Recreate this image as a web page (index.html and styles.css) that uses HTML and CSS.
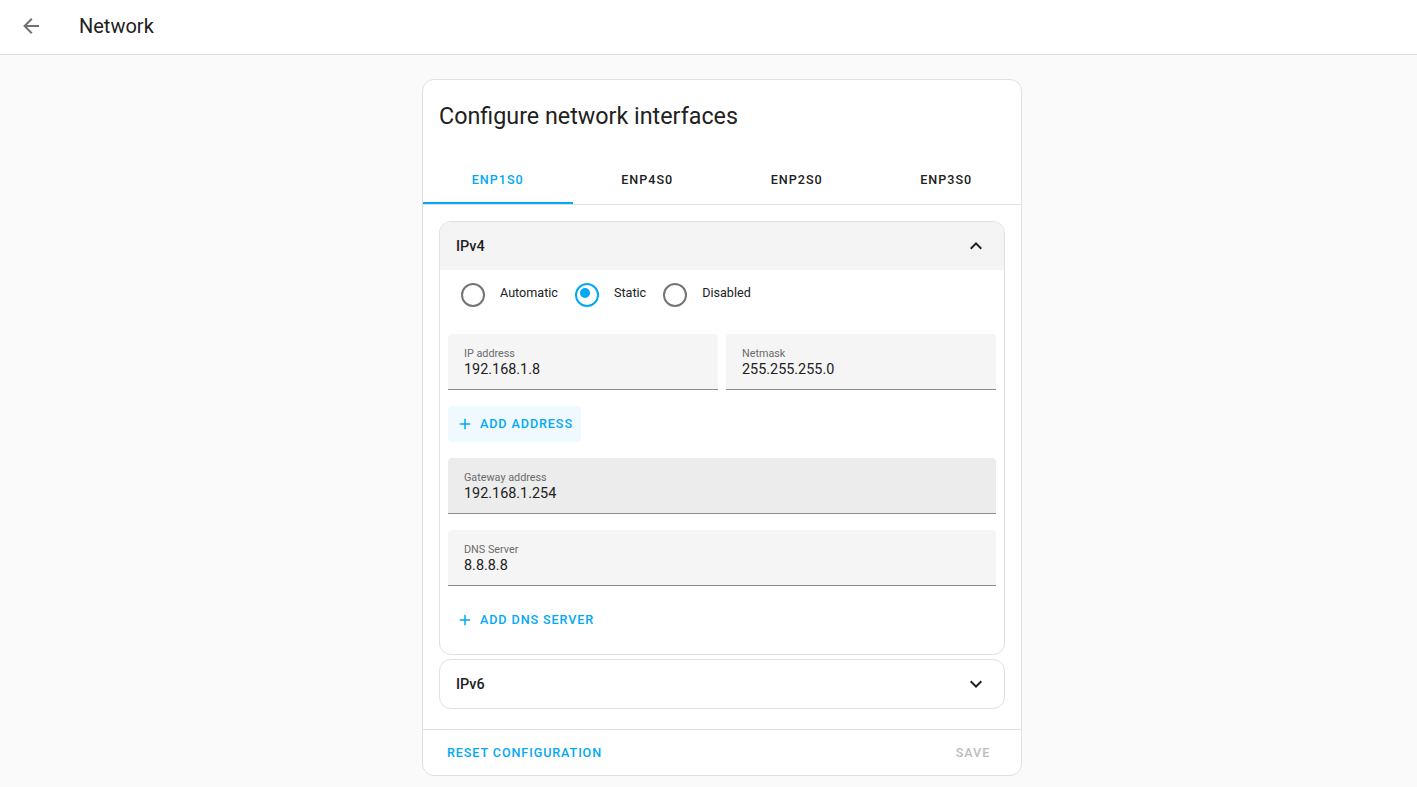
FILE: index.html
```html
<!DOCTYPE html>
<html lang="en">
<head>
<meta charset="utf-8">
<title>Network</title>
<link rel="stylesheet" href="styles.css">
</head>
<body>
<header class="toolbar">
  <div class="icon-btn">
    <svg viewBox="0 0 24 24" width="24" height="24"><path d="M20,11V13H8L13.5,18.5L12.08,19.92L4.16,12L12.08,4.08L13.5,5.5L8,11H20Z"/></svg>
  </div>
  <div class="toolbar-title">Network</div>
</header>
<main class="main">
  <section class="card">
    <h1 class="card-header">Configure network interfaces</h1>
    <nav class="tabs">
      <div class="tab active">ENP1S0</div>
      <div class="tab">ENP4S0</div>
      <div class="tab">ENP2S0</div>
      <div class="tab">ENP3S0</div>
    </nav>
    <div class="card-content">
      <div class="panel">
        <div class="panel-header expanded">
          <span>IPv4</span>
          <svg viewBox="0 0 24 24" width="24" height="24"><path d="M7.41,15.41L12,10.83L16.59,15.41L18,14L12,8L6,14L7.41,15.41Z"/></svg>
        </div>
        <div class="panel-body">
          <div class="radios">
            <label class="formfield"><span class="radio"></span><span class="radio-label">Automatic</span></label>
            <label class="formfield"><span class="radio checked"></span><span class="radio-label">Static</span></label>
            <label class="formfield"><span class="radio"></span><span class="radio-label">Disabled</span></label>
          </div>
          <div class="field-row">
            <div class="field"><span class="field-label">IP address</span><span class="field-value">192.168.1.8</span></div>
            <div class="field"><span class="field-label">Netmask</span><span class="field-value">255.255.255.0</span></div>
          </div>
          <div class="btn icon-text tinted">
            <svg viewBox="0 0 24 24" width="18" height="18"><path d="M19,13H13V19H11V13H5V11H11V5H13V11H19V13Z"/></svg>
            <span>ADD ADDRESS</span>
          </div>
          <div class="field hover"><span class="field-label">Gateway address</span><span class="field-value">192.168.1.254</span></div>
          <div class="field"><span class="field-label">DNS Server</span><span class="field-value">8.8.8.8</span></div>
          <div class="btn icon-text">
            <svg viewBox="0 0 24 24" width="18" height="18"><path d="M19,13H13V19H11V13H5V11H11V5H13V11H19V13Z"/></svg>
            <span>ADD DNS SERVER</span>
          </div>
        </div>
      </div>
      <div class="panel second">
        <div class="panel-header">
          <span>IPv6</span>
          <svg viewBox="0 0 24 24" width="24" height="24"><path d="M7.41,8.58L12,13.17L16.59,8.58L18,10L12,16L6,10L7.41,8.58Z"/></svg>
        </div>
      </div>
    </div>
    <div class="card-actions">
      <div class="btn text">RESET CONFIGURATION</div>
      <div class="btn text disabled">SAVE</div>
    </div>
  </section>
</main>
</body>
</html>
```
FILE: styles.css
```css
* { box-sizing: border-box; }
html, body { margin: 0; padding: 0; }
body {
  font-family: Roboto, "Noto Sans", sans-serif;
  background: #fafafa;
  color: #212121;
  min-height: 787px;
}
.toolbar {
  height: 55px;
  background: #fff;
  border-bottom: 1px solid #e0e0e0;
  display: flex;
  align-items: center;
  padding: 0 0 2px 7px;
}
.icon-btn {
  width: 48px;
  height: 48px;
  display: flex;
  align-items: center;
  justify-content: center;
  fill: #727272;
}
.toolbar-title {
  margin-left: 24px;
  font-size: 20px;
  font-weight: 400;
  color: #212121;
}
.main {
  display: flex;
  justify-content: center;
  padding: 24px 0 0 27px;
}
.card {
  width: 600px;
  background: #fff;
  border: 1px solid #e0e0e0;
  border-radius: 12px;
}
.card-header {
  margin: 0;
  padding: 12px 16px 16px;
  font-size: 23.3px;
  font-weight: 400;
  line-height: 48px;
  color: #212121;
}
.tabs {
  display: grid;
  grid-template-columns: repeat(4, 1fr);
  border-bottom: 1px solid #e0e0e0;
}
.tab {
  height: 48px;
  display: flex;
  align-items: center;
  justify-content: center;
  padding-bottom: 1px;
  font-size: 12.6px;
  font-weight: 500;
  letter-spacing: 1px;
  color: #212121;
}
.tab.active {
  color: #03a9f4;
  box-shadow: inset 0 -2px 0 #03a9f4;
}
.card-content {
  padding: 16px 16px 20px;
}
.panel {
  border: 1px solid #e0e0e0;
  border-radius: 12px;
  overflow: hidden;
}
.panel.second { margin-top: 4px; }
.panel-header {
  height: 48px;
  display: flex;
  align-items: center;
  justify-content: space-between;
  padding: 0 16px;
  font-size: 14.4px;
  font-weight: 500;
  color: #212121;
  fill: #212121;
}
.panel-header.expanded { background: #f4f4f4; }
.panel-body {
  padding: 0 8px 16px;
  display: flex;
  flex-direction: column;
  align-items: flex-start;
}
.radios {
  height: 46px;
  display: flex;
  align-items: center;
  padding: 0 0 1px 4px;
}
.formfield {
  display: flex;
  align-items: center;
}
.radio {
  width: 40px;
  height: 40px;
  position: relative;
}
.radio::before {
  content: "";
  position: absolute;
  left: 9px;
  top: 10px;
  width: 20px;
  height: 20px;
  border: 2px solid #757575;
  border-radius: 50%;
}
.radio.checked::before { border-color: #03a9f4; }
.radio.checked::after {
  content: "";
  position: absolute;
  left: 14px;
  top: 15px;
  width: 10px;
  height: 10px;
  background: #03a9f4;
  border-radius: 50%;
}
.radio-label {
  padding: 0 8px;
  font-size: 12.6px;
  color: #212121;
}
.field-row {
  margin-top: 18px;
  display: grid;
  grid-template-columns: 1fr 1fr;
  gap: 8px;
  width: 100%;
}
.field {
  width: 100%;
  height: 56px;
  background: #f5f5f5;
  border-radius: 4px 4px 0 0;
  border-bottom: 1px solid #8c8c8c;
  padding: 12px 16px 0;
  display: flex;
  flex-direction: column;
}
.field.hover { background: #ececec; }
.panel-body > .field { margin-top: 16px; }
.field-label {
  font-size: 10.8px;
  line-height: 16px;
  color: #6b6b6b;
}
.field-value {
  margin-top: -2px;
  font-size: 14.4px;
  line-height: 20px;
  color: #212121;
}
.btn {
  height: 36px;
  display: inline-flex;
  align-items: center;
  justify-content: center;
  border-radius: 4px;
  font-size: 12.6px;
  font-weight: 500;
  letter-spacing: 0.9px;
  color: #03a9f4;
  fill: #03a9f4;
}
.btn.icon-text {
  margin-top: 16px;
  padding: 0 8px 1px 8px;
}
.btn.icon-text svg { margin-right: 6px; }
.btn.tinted { background: #f0f9fe; }
.btn.text {
  min-width: 64px;
  padding: 0 8px;
}
.btn.disabled { color: #bdbdbd; }
.card-actions {
  border-top: 1px solid #e0e0e0;
  padding: 4px 16px 5px;
  display: flex;
  justify-content: space-between;
}
```
